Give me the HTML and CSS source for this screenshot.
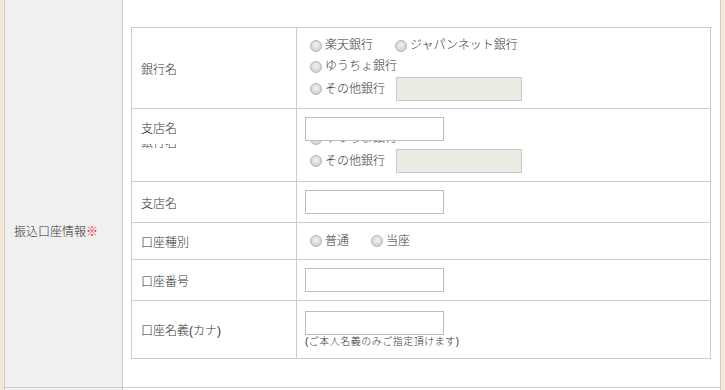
FILE: index.html
```html
<!DOCTYPE html>
<html lang="ja">
<head>
  <meta charset="UTF-8">
  <title>振込口座情報</title>
  <link rel="stylesheet" href="styles.css">
</head>
<body>
  <div class="form-wrap">
    <div class="outer-row stub">
      <div class="outer-th"></div>
      <div class="outer-td"></div>
    </div>

    <div class="outer-row main">
      <div class="outer-th">
        <span>振込口座情報<span class="req">※</span></span>
      </div>
      <div class="outer-td">
        <div class="bank-table">
          <!-- 銀行名 -->
          <div class="cell label">銀行名</div>
          <div class="cell value">
            <div class="bank-list">
              <div class="line">
                <label class="opt"><input type="radio" name="bank">楽天銀行</label>
                <label class="opt"><input type="radio" name="bank">ジャパンネット銀行</label>
              </div>
              <div class="line">
                <label class="opt"><input type="radio" name="bank">ゆうちょ銀行</label>
              </div>
              <div class="line">
                <label class="opt"><input type="radio" name="bank">その他銀行</label>
                <input type="text" class="other-bank" disabled>
              </div>
            </div>
          </div>

          <!-- slideUp in progress -->
          <div class="cell label top">
            <div class="line">支店名</div>
            <div class="clip-label"><div class="line">銀行名</div></div>
          </div>
          <div class="cell value top">
            <input type="text" class="text-input">
            <div class="clip-value">
              <div class="bank-list">
                <div class="line">
                  <label class="opt"><input type="radio" name="bank2">楽天銀行</label>
                  <label class="opt"><input type="radio" name="bank2">ジャパンネット銀行</label>
                </div>
                <div class="line">
                  <label class="opt"><input type="radio" name="bank2">ゆうちょ銀行</label>
                </div>
                <div class="line">
                  <label class="opt"><input type="radio" name="bank2">その他銀行</label>
                  <input type="text" class="other-bank" disabled>
                </div>
              </div>
            </div>
          </div>

          <div class="cell label">支店名</div>
          <div class="cell value"><input type="text" class="text-input"></div>

          <div class="cell label">口座種別</div>
          <div class="cell value">
            <div class="line">
              <label class="opt"><input type="radio" name="kind">普通</label>
              <label class="opt"><input type="radio" name="kind">当座</label>
            </div>
          </div>

          <div class="cell label">口座番号</div>
          <div class="cell value"><input type="text" class="text-input"></div>

          <div class="cell label">口座名義(カナ)</div>
          <div class="cell value column">
            <input type="text" class="text-input">
            <div class="note">(ご本人名義のみご指定頂けます)</div>
          </div>
        </div>
      </div>
    </div>

    <div class="outer-row stub last">
      <div class="outer-th"></div>
      <div class="outer-td"></div>
    </div>
  </div>
</body>
</html>
```

FILE: styles.css
```css
body {
  margin: 0;
  height: 390px;
  overflow: hidden;
  background-color: #f3e9d9;
  font-family: "Liberation Sans", "Noto Sans CJK JP", sans-serif;
  font-size: 12px;
  font-weight: 300;
  color: #333;
}

.form-wrap {
  margin-left: 4px;
  width: 717px;
}

.outer-row {
  display: flex;
  border-left: 1px solid #ccc;
  border-right: 1px solid #ccc;
}

.outer-row.stub {
  height: 3px;
}

.outer-row.stub.last {
  height: 2px;
}

.outer-row.main {
  height: 383px;
  border-top: 1px solid #ccc;
  border-bottom: 1px solid #ccc;
}

.outer-th {
  width: 118px;
  background-color: #f0f0f0;
  border-right: 1px solid #ccc;
  padding: 219px 0 0 9px;
  box-sizing: border-box;
  line-height: 18px;
}

.outer-td {
  flex: 1;
  background-color: #fff;
  padding: 23px 8px 0 8px;
}

.req {
  color: #e8131f;
}

.bank-table {
  display: grid;
  grid-template-columns: 165px 414px;
  grid-template-rows: 81px 73px 41px 37px 41px 58px;
  border-top: 1px solid #ccc;
  border-left: 1px solid #ccc;
}

.cell {
  display: flex;
  align-items: center;
  border-right: 1px solid #ccc;
  border-bottom: 1px solid #ccc;
  box-sizing: border-box;
  min-width: 0;
}

.cell.label {
  padding-left: 9px;
}

.cell.value {
  padding-left: 8px;
}

.cell.top {
  flex-direction: column;
  align-items: flex-start;
  padding-top: 8px;
  overflow: hidden;
}

.cell.label.top {
  padding-top: 10px;
}

.cell.column {
  flex-direction: column;
  align-items: flex-start;
  justify-content: center;
}

.line {
  display: flex;
  align-items: center;
  line-height: 21px;
  height: 21px;
  white-space: nowrap;
}

.bank-list .line:last-child {
  height: 24px;
}

.clip-label {
  height: 6px;
  margin-top: 4px;
  overflow: hidden;
}

.clip-label .line {
  height: 18px;
  line-height: 18px;
  margin-top: -10px;
}

.clip-value {
  height: 32px;
  overflow: hidden;
  position: relative;
  z-index: 0;
}

.clip-value .bank-list {
  margin-top: -34px;
}

.opt {
  display: inline-flex;
  align-items: center;
  margin-right: 17px;
}

.opt input[type="radio"] {
  appearance: none;
  -webkit-appearance: none;
  width: 12px;
  height: 12px;
  margin: 0 3px 0 5px;
  border: 1px solid #b4b4b4;
  border-radius: 50%;
  background: radial-gradient(circle at 50% 40%, #f2f2f2 0, #dadada 55%, #c4c4c4 100%);
  box-sizing: border-box;
}

.other-bank {
  width: 126px;
  height: 24px;
  margin: 0 0 0 -6px;
  border: 1px solid #c8c8c8;
  background-color: #ebebe4;
  box-sizing: border-box;
  padding: 0;
}

.text-input {
  width: 139px;
  height: 24px;
  margin: 0;
  border: 1px solid #bdbdbd;
  background-color: #fff;
  box-sizing: border-box;
  padding: 0 4px;
  position: relative;
  z-index: 1;
}

.note {
  font-size: 10px;
  line-height: 14px;
  letter-spacing: 0.5px;
}
```
